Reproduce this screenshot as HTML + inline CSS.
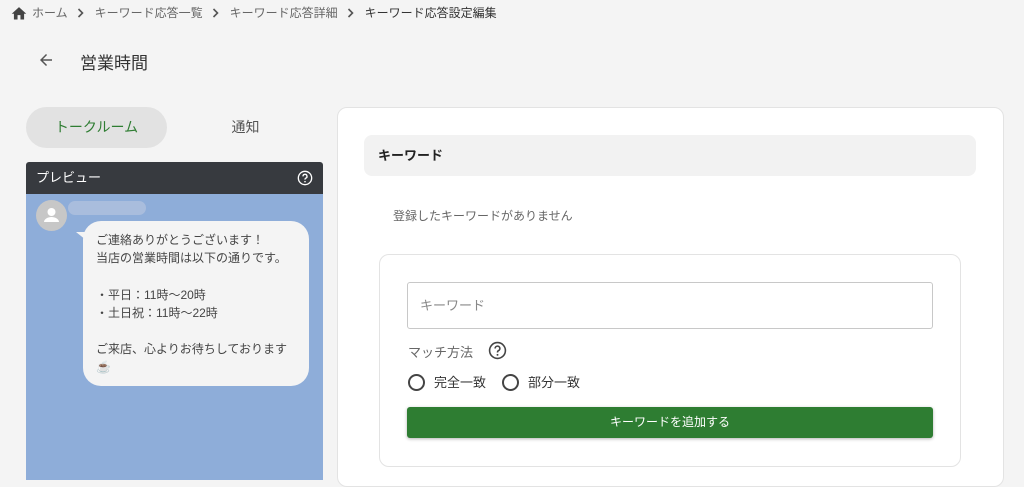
<!DOCTYPE html>
<html><head><meta charset="utf-8"><style>
*{margin:0;padding:0;box-sizing:border-box}
body{width:1024px;height:480px;overflow:hidden;background:#f4f4f4;font-family:"Liberation Sans","Noto Sans CJK JP",sans-serif;color:#333;position:relative}
.a{position:absolute}
.bc{top:4px;left:10px;font-size:12px;color:#666;display:flex;align-items:center;white-space:nowrap}
.bc span{margin-right:9px}
.sep{margin:0 11px 0 0}
</style></head><body>
<div class="a bc">
<svg width="18" height="16" viewBox="0 0 24 22" style="margin-right:4px"><path d="M10 20v-6h4v6h5v-8h3L12 3 2 12h3v8z" fill="#444"/></svg>
<span>ホーム</span><svg class="sep" width="7" height="10" viewBox="0 0 7 10"><path d="M1.5 1l4 4-4 4" fill="none" stroke="#555" stroke-width="1.6"/></svg><span>キーワード応答一覧</span><svg class="sep" width="7" height="10" viewBox="0 0 7 10"><path d="M1.5 1l4 4-4 4" fill="none" stroke="#555" stroke-width="1.6"/></svg><span>キーワード応答詳細</span><svg class="sep" width="7" height="10" viewBox="0 0 7 10"><path d="M1.5 1l4 4-4 4" fill="none" stroke="#555" stroke-width="1.6"/></svg><span style="color:#333">キーワード応答設定編集</span>
</div>
<svg class="a" style="left:37px;top:51px" width="18" height="18" viewBox="0 0 24 24"><path d="M20 11H7.8l5.6-5.6L12 4l-8 8 8 8 1.4-1.4L7.8 13H20z" fill="#555"/></svg>
<div class="a" style="left:80px;top:49px;font-size:17px;color:#333">営業時間</div>
<div class="a" style="left:26px;top:107px;width:141px;height:41px;border-radius:21px;background:#e2e2e2;color:#2e7d32;font-size:14px;text-align:center;line-height:41px">トークルーム</div>
<div class="a" style="left:175px;top:107px;width:141px;height:41px;color:#555;font-size:14px;text-align:center;line-height:41px">通知</div>
<div class="a" style="left:26px;top:162px;width:297px;height:32px;background:#373a3f;border-radius:3px 3px 0 0;color:#fff;font-size:13px;line-height:32px;padding-left:10px">プレビュー
<svg class="a" style="right:10px;top:8px" width="16" height="16" viewBox="0 0 24 24"><circle cx="12" cy="12" r="10" fill="none" stroke="#fff" stroke-width="2"/><path d="M9 9.5a3 3 0 1 1 4 2.8c-.8.4-1 .9-1 1.7v.5" fill="none" stroke="#fff" stroke-width="2"/><circle cx="12" cy="17.5" r="1.2" fill="#fff"/></svg></div>
<div class="a" style="left:26px;top:194px;width:297px;height:286px;background:#8eadd9"></div>
<div class="a" style="left:36px;top:200px;width:31px;height:31px;border-radius:50%;background:#c7c7c7"><svg width="31" height="31" viewBox="0 0 31 31"><circle cx="15.5" cy="12" r="4" fill="#fff"/><path d="M8 22c0-3 4-5 7.5-5s7.5 2 7.5 5z" fill="#fff"/></svg></div>
<div class="a" style="left:68px;top:201px;width:78px;height:14px;border-radius:7px;background:#a9bddd"></div>
<div class="a" style="left:76px;top:232px;width:0;height:0;border-left:10px solid transparent;border-top:8px solid #f4f4f4"></div>
<div class="a" style="left:83px;top:221px;width:226px;height:165px;background:#f4f4f4;border-radius:18px;padding:10px 12px 10px 13px;font-size:12px;line-height:18.2px;color:#444;white-space:nowrap">ご連絡ありがとうございます！<br>当店の営業時間は以下の通りです。<br><br>・平日：11時〜20時<br>・土日祝：11時〜22時<br><br>ご来店、心よりお待ちしております<br>☕</div>
<div class="a" style="left:337px;top:107px;width:667px;height:380px;background:#fff;border:1px solid #e3e3e3;border-radius:10px"></div>
<div class="a" style="left:364px;top:135px;width:612px;height:41px;background:#f2f2f2;border-radius:8px;font-size:13px;font-weight:bold;line-height:41px;padding-left:14px;color:#222">キーワード</div>
<div class="a" style="left:393px;top:207px;font-size:12px;color:#666">登録したキーワードがありません</div>
<div class="a" style="left:379px;top:254px;width:582px;height:213px;border:1px solid #e3e3e3;border-radius:10px"></div>
<div class="a" style="left:407px;top:282px;width:526px;height:47px;border:1px solid #c8c8c8;border-radius:3px;font-size:13px;color:#888;line-height:45px;padding-left:12px">キーワード</div>
<div class="a" style="left:408px;top:342px;font-size:13px;color:#666">マッチ方法</div>
<svg class="a" style="left:488px;top:341px" width="19" height="19" viewBox="0 0 24 24"><circle cx="12" cy="12" r="10" fill="none" stroke="#444" stroke-width="2"/><path d="M9 9.5a3 3 0 1 1 4 2.8c-.8.4-1 .9-1 1.7v.5" fill="none" stroke="#444" stroke-width="2"/><circle cx="12" cy="17.5" r="1.2" fill="#444"/></svg>
<div class="a" style="left:408px;top:374px;width:17px;height:17px;border:2px solid #444;border-radius:50%"></div>
<div class="a" style="left:434px;top:372px;font-size:13px;color:#333">完全一致</div>
<div class="a" style="left:502px;top:374px;width:17px;height:17px;border:2px solid #444;border-radius:50%"></div>
<div class="a" style="left:528px;top:372px;font-size:13px;color:#333">部分一致</div>
<div class="a" style="left:407px;top:407px;width:526px;height:31px;background:#2e7d32;border-radius:3px;color:#fff;font-size:12px;text-align:center;line-height:31px;box-shadow:0 1px 3px rgba(0,0,0,.3)">キーワードを追加する</div>
</body></html>
